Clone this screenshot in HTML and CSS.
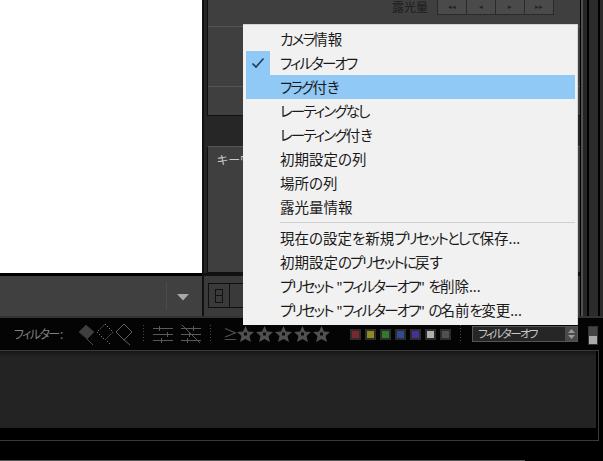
FILE: index.html
```html
<!DOCTYPE html>
<html lang="ja">
<head>
  <meta charset="UTF-8">
  <title>ライブラリフィルター</title>
  <link rel="stylesheet" href="styles.css">
</head>
<body>
  <div class="top">
    <div class="main">
      <div class="preview"></div>
      <div class="toolbar">
        <span class="toolbar-sep"></span>
        <svg class="toolbar-arrow" width="14" height="8" viewBox="0 0 14 8"><polygon points="1,1 13,1 7,7.5" fill="#a8a8a8"/></svg>
      </div>
    </div>
    <div class="side">
      <div class="panels">
        <div class="panel-top">
          <div class="exposure">
            <span class="exposure-label">露光量</span>
            <div class="stepper">
              <span>◂◂</span><span>◂</span><span>▸</span><span>▸▸</span>
            </div>
          </div>
          <div class="panel-row"></div>
        </div>
        <div class="panel-head"></div>
        <div class="panel-keyword">
          <div class="keyword-label">キーワード</div>
        </div>
      </div>
      <div class="side-tools">
        <div class="grid-btn">
          <span class="grid-cell"><i></i></span>
          <span class="grid-rest"></span>
        </div>
      </div>
    </div>
    <div class="rail">
      <span class="rail-a"></span><span class="rail-b"></span><span class="rail-c"></span><span class="rail-d"></span>
    </div>
  </div>

  <div class="filterbar">
    <span class="filter-label">フィルター :</span>
    <div class="flags">
      <svg width="60" height="24" viewBox="0 0 60 24">
        <polygon points="9,3 17,10 10,17 2,10" fill="#3e3e3e" stroke="#343434"/>
        <line x1="10" y1="17" x2="16" y2="23" stroke="#4c4c4c"/>
        <polygon points="28,2 36,10 28,18 20,10" fill="none" stroke="#aaa" stroke-dasharray="1 2"/>
        <line x1="30" y1="19" x2="33" y2="22" stroke="#999" stroke-dasharray="1 2"/>
        <polygon points="47,2 55,10 47,18 39,10" fill="none" stroke="#5e5e5e"/>
        <line x1="47" y1="18" x2="53" y2="23" stroke="#5e5e5e"/>
      </svg>
    </div>
    <span class="dots dots-a"></span>
    <svg class="sliders" width="48" height="18" viewBox="0 0 48 18">
      <g stroke="#5a5a5a">
        <path d="M0 3.5H20M0 9.5H20M0 15.5H20M6.500 1V6M14.500 7V12M8.500 13V18"/>
        <path d="M28 3.500H48M28 9.500H48M28 15.500H48M40.500 1V6M36.500 7V12M34.500 13V18M29 0L47 18"/>
      </g>
    </svg>
    <span class="dots dots-b"></span>
    <span class="gte">≥</span>
    <div class="stars">
      <svg class="star" width="19" height="18" viewBox="0 0 19 18"><polygon points="9.500,1 12,6.500 18,7 13.500,11 15,17 9.500,14 4,17 5.500,11 1,7 7,6.500" fill="#505050"/><rect x="8" y="7.500" width="3" height="3" fill="#0c0c0c"/></svg>
      <svg class="star" width="19" height="18" viewBox="0 0 19 18"><polygon points="9.500,1 12,6.500 18,7 13.500,11 15,17 9.500,14 4,17 5.500,11 1,7 7,6.500" fill="#505050"/><rect x="8" y="7.500" width="3" height="3" fill="#0c0c0c"/></svg>
      <svg class="star" width="19" height="18" viewBox="0 0 19 18"><polygon points="9.500,1 12,6.500 18,7 13.500,11 15,17 9.500,14 4,17 5.500,11 1,7 7,6.500" fill="#505050"/><rect x="8" y="7.500" width="3" height="3" fill="#0c0c0c"/></svg>
      <svg class="star" width="19" height="18" viewBox="0 0 19 18"><polygon points="9.500,1 12,6.500 18,7 13.500,11 15,17 9.500,14 4,17 5.500,11 1,7 7,6.500" fill="#505050"/><rect x="8" y="7.500" width="3" height="3" fill="#0c0c0c"/></svg>
      <svg class="star" width="19" height="18" viewBox="0 0 19 18"><polygon points="9.500,1 12,6.500 18,7 13.500,11 15,17 9.500,14 4,17 5.500,11 1,7 7,6.500" fill="#505050"/><rect x="8" y="7.500" width="3" height="3" fill="#0c0c0c"/></svg>
    </div>
    <div class="swatches">
      <span class="swatch red"></span>
      <span class="swatch yellow"></span>
      <span class="swatch green"></span>
      <span class="swatch blue"></span>
      <span class="swatch purple"></span>
      <span class="swatch white"></span>
      <span class="swatch gray"></span>
    </div>
    <span class="dots dots-c"></span>
    <div class="preset">
      <span class="preset-name">フィルターオフ</span>
      <span class="preset-spin">
        <svg width="7" height="10" viewBox="0 0 7 10"><polygon points="3.500,0 7,4 0,4" fill="#999"/><polygon points="0,6 7,6 3.500,10" fill="#999"/></svg>
      </span>
    </div>
    <div class="knob"><span></span></div>
  </div>

  <div class="film">
    <div class="film-inner"></div>
  </div>
  <div class="bottom"></div>

  <div class="menu">
    <div class="menu-item"><span class="kana">カメラ</span>情報</div>
    <div class="menu-item checked">
      <span class="check">
        <svg width="14" height="12" viewBox="0 0 14 12"><path d="M1.500 6.500L5 10L12.500 1.500" fill="none" stroke="#1d3f5f" stroke-width="1.600"/></svg>
      </span>
      <span class="kana">フィルターオフ</span>
    </div>
    <div class="menu-item active"><span class="kana">フラグ</span>付き</div>
    <div class="menu-item"><span class="kana">レーティングなし</span></div>
    <div class="menu-item"><span class="kana">レーティング</span>付き</div>
    <div class="menu-item">初期設定の列</div>
    <div class="menu-item">場所の列</div>
    <div class="menu-item">露光量情報</div>
    <div class="menu-sep"></div>
    <div class="menu-item">現在の設定を新規<span class="kana">プリセットとして</span>保存...</div>
    <div class="menu-item">初期設定<span class="kana">のプリセットに</span>戻す</div>
    <div class="menu-item"><span class="kana">プリセット</span> "<span class="kana">フィルターオフ</span>" <span class="kana">を</span>削除...</div>
    <div class="menu-item"><span class="kana">プリセット</span> "<span class="kana">フィルターオフ</span>" <span class="kana">の</span>名前<span class="kana">を</span>変更...</div>
  </div>
</body>
</html>
```

FILE: styles.css
```css
html, body {
  margin: 0;
  height: 100%;
  overflow: hidden;
  background: #000;
}
body {
  font-family: "Noto Sans", "Noto Sans CJK JP", sans-serif;
  font-feature-settings: "palt";
  position: relative;
}
.top {
  display: flex;
  height: 316px;
}
.main {
  width: 202px;
  display: flex;
  flex-direction: column;
}
.preview {
  height: 273px;
  background: #fff;
}
.toolbar {
  margin-top: 3px;
  height: 40px;
  background: #404040;
  display: flex;
  align-items: center;
  justify-content: flex-end;
  padding-right: 12px;
}
.toolbar-sep {
  width: 1px;
  height: 28px;
  background: #4c4c4c;
  margin-right: 9px;
}
.toolbar-arrow {
  margin-top: 1px;
}
.side {
  width: 378px;
  display: flex;
  flex-direction: column;
  background: #111;
  padding-left: 2px;
  box-sizing: border-box;
}
.panels {
  height: 273px;
  background: #262626;
  padding-left: 3px;
  display: flex;
  flex-direction: column;
}
.panel-top {
  height: 116px;
  background: #3f3f3f;
  border-left: 1px solid #111;
  border-bottom: 1px solid #111;
  box-sizing: border-box;
}
.exposure {
  height: 27px;
  box-sizing: border-box;
  border-bottom: 1px solid #555;
  display: flex;
  justify-content: flex-end;
  padding-right: 26px;
}
.exposure-label {
  font-size: 12px;
  line-height: 14px;
  padding-top: 1px;
  height: 14px;
  color: #1c1c1c;
  margin-right: 9px;
}
.stepper {
  display: flex;
  height: 15px;
  border: 1px solid #2a2a2a;
  border-top: 0;
  background: #4a4a4a;
  box-sizing: border-box;
  font-size: 7px;
  line-height: 13px;
  color: #222;
  text-align: center;
}
.stepper span {
  width: 28px;
  border-right: 1px solid #2a2a2a;
}
.stepper span:last-child {
  border-right: 0;
}
.panel-row {
  height: 60px;
  border-bottom: 1px solid #555;
  box-sizing: border-box;
}
.panel-head {
  height: 30px;
}
.panel-keyword {
  flex: 1;
  background: #3f3f3f;
  border: 1px solid #111;
  border-right: 0;
  border-top-color: #555;
}
.keyword-label {
  font-size: 12px;
  line-height: 14px;
  color: #c8c8c8;
  margin: 7px 0 0 9px;
}
.side-tools {
  flex: 1;
  margin-top: 3px;
  background: #3a3a3a;
  padding: 7px 0 0 4px;
}
.grid-btn {
  display: flex;
  height: 25px;
  width: 60px;
  border: 1px solid #111;
  box-sizing: border-box;
}
.grid-cell {
  width: 20px;
  border-right: 1px solid #111;
  display: flex;
  justify-content: center;
  align-items: center;
}
.grid-cell i {
  display: block;
  width: 6px;
  height: 12px;
  border: 1px solid #111;
  background: linear-gradient(#111, #111) center / 100% 1px no-repeat;
}
.rail {
  flex: 1;
  display: flex;
  background: #000;
}
.rail span {
  display: block;
}
.rail-a {
  width: 2px;
  margin-left: 1px;
  background: #505050;
}
.rail-b {
  width: 4px;
  background: #262626;
  margin-right: 2px;
}
.rail-c {
  width: 9px;
  background: #2b2b2b;
  margin-right: 2px;
}
.rail-d {
  width: 3px;
  background: #2b2b2b;
}
.filterbar {
  height: 34px;
  box-sizing: border-box;
  border-top: 2px solid #333;
  display: flex;
  align-items: center;
  padding-left: 14px;
  background: #040404;
}
.filter-label {
  width: 63px;
  font-size: 12px;
  letter-spacing: -1.6px;
  color: #808080;
  white-space: nowrap;
}
.flags {
  display: flex;
}
.dots {
  display: block;
  width: 1px;
  height: 18px;
  background: repeating-linear-gradient(#4a4a4a 0 1px, transparent 1px 3px);
}
.dots-a {
  margin: 0 9px 0 6px;
}
.sliders {
  margin-right: 9px;
}
.dots-b {
  margin-right: 12px;
}
.gte {
  font-size: 15px;
  line-height: 18px;
  color: #505050;
  width: 14px;
}
.stars {
  display: flex;
  margin-left: -1px;
}
.stars .star {
  display: block;
}
.swatches {
  display: flex;
  gap: 4px;
  margin-left: 19px;
}
.swatch {
  display: block;
  width: 11px;
  height: 11px;
  box-sizing: border-box;
  border: 2px solid #2c2c2c;
}
.red { background: #7c2630; }
.yellow { background: #8c8a20; }
.green { background: #2f7a2f; }
.blue { background: #2f4a92; }
.purple { background: #46309a; }
.white { background: #b0b0b0; }
.gray { background: #505050; }
.dots-c {
  margin: 0 11px 0 9px;
}
.preset {
  width: 106px;
  height: 16px;
  box-sizing: border-box;
  border: 1px solid #555;
  background: #262626;
  color: #c8c8c8;
  font-size: 11.500px;
  line-height: 14px;
  padding-left: 5px;
  display: flex;
  justify-content: space-between;
}
.preset-name {
  letter-spacing: -1.7px;
}
.preset-spin {
  width: 12px;
  background: #4a4a4a;
  display: flex;
  align-items: center;
  justify-content: center;
}
.knob {
  width: 10px;
  height: 19px;
  box-sizing: border-box;
  margin: 2px 0 0 10px;
  border: 1px solid #333;
  background: #444;
  display: flex;
  flex-direction: column;
  justify-content: flex-end;
}
.knob span {
  display: block;
  height: 8px;
  background: #aaa;
}
.film {
  height: 91px;
  box-sizing: border-box;
  margin-right: 4px;
  border: 1px solid #3a3a3a;
  border-left: 0;
  padding-right: 2px;
}
.film-inner {
  height: 77px;
  background: linear-gradient(#161616, #232323 6px);
}
.bottom {
  height: 20px;
  box-sizing: border-box;
  border-bottom: 1px solid #555;
  width: 525px;
}
.menu {
  position: absolute;
  left: 243px;
  top: 24px;
  width: 335px;
  height: 301px;
  box-sizing: border-box;
  padding: 3px;
  background: #f1f1f1;
  box-shadow: inset 0 1px 0 #d4d4d4, inset -1px 0 0 #d4d4d4;
  color: #1a1a1a;
  font-size: 14.500px;
}
.menu-item {
  height: 24px;
  line-height: 24px;
  padding-left: 34px;
  position: relative;
  white-space: nowrap;
}
.menu-item.active {
  background: #90c8f6;
}
.kana {
  letter-spacing: -1.8px;
}
.check {
  position: absolute;
  left: 0;
  top: 0;
  width: 24px;
  height: 24px;
  background: #90c8f6;
  display: flex;
  align-items: center;
  justify-content: center;
}
.menu-sep {
  height: 1px;
  background: #d0d0d0;
  margin: 3px 0 3px 34px;
}
```
